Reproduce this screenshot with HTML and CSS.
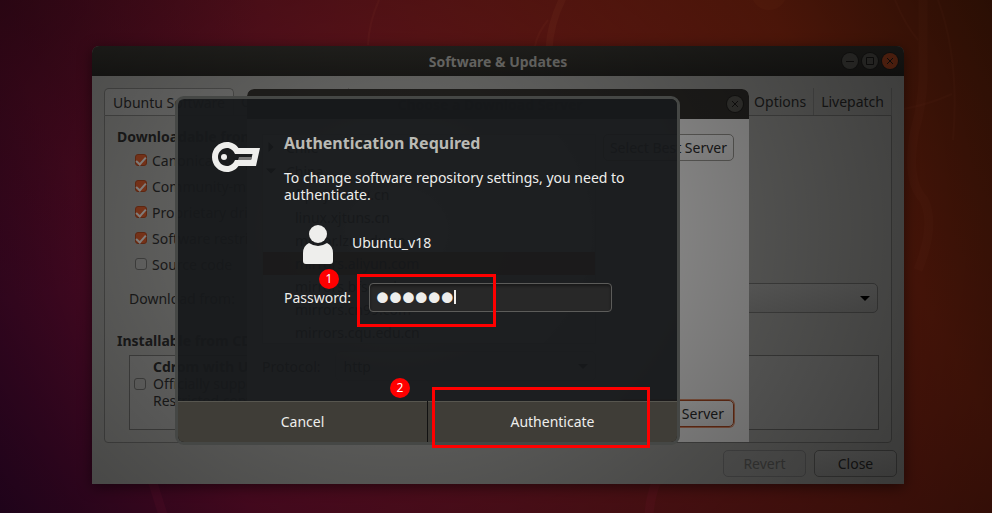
FILE: index.html
```html
<!DOCTYPE html>
<html lang="en">
<head>
<meta charset="utf-8">
<title>Software &amp; Updates</title>
<link rel="stylesheet" href="styles.css">
</head>
<body>
<main class="desktop">
  <svg class="wallpaper" viewBox="0 0 992 513" preserveAspectRatio="none" aria-hidden="true">
    <g fill="none" stroke="#ff7a50" stroke-opacity=".13">
      <path d="M565-6Q550 22 549 50" stroke-width="7"/>
      <path d="M923 0V80Q922 106 915 130Q905 180 924 200Q936 225 918 270" stroke-width="9" stroke-opacity=".09"/>
      <path d="M895 0Q905 25 918 40M938 0Q960 60 953 140M904 109Q930 104 952 94M379 0Q369 22 368 45M548 20Q538 32 535 46" stroke-width="2" stroke-opacity=".1"/>
      <path d="M152 480L164 518M657 480Q649 500 649 518" stroke="#ff3070" stroke-width="9"/>
    </g>
    <circle cx="769" cy="-8" r="18" fill="#ff7a30" fill-opacity=".1"/>
  </svg>

  <section class="window main-window" aria-label="Software &amp; Updates">
    <header class="titlebar">
      <h1 class="title">Software &amp; Updates</h1>
      <div class="controls">
        <button class="control" aria-label="Minimize"><svg viewBox="0 0 16 16"><path d="M4 8.500h8"/></svg></button>
        <button class="control" aria-label="Maximize"><svg viewBox="0 0 16 16"><path d="M4.500 4.500h7v7h-7z"/></svg></button>
        <button class="control control-close" aria-label="Close window"><svg viewBox="0 0 16 16"><path d="M5 5l6 6M11 5l-6 6"/></svg></button>
      </div>
    </header>
    <div class="window-body">
      <nav class="tabs">
        <button class="tab tab-active">Ubuntu Software</button>
        <button class="tab">Other Software</button>
        <button class="tab tab-end">Options</button>
        <button class="tab">Livepatch</button>
      </nav>
      <div class="page">
        <h2 class="heading">Downloadable from the Internet</h2>
        <div class="checks">
          <label class="check"><input type="checkbox" checked>Canonical-supported free and open-source software (main)</label>
          <label class="check"><input type="checkbox" checked>Community-maintained free and open-source software (universe)</label>
          <label class="check"><input type="checkbox" checked>Proprietary drivers for devices (restricted)</label>
          <label class="check"><input type="checkbox" checked>Software restricted by copyright or legal issues (multiverse)</label>
          <label class="check"><input type="checkbox">Source code</label>
        </div>
        <div class="download">
          <label for="source">Download from:</label>
          <span class="select-box"><select id="source"><option>Main server</option></select></span>
        </div>
        <h2 class="heading">Installable from CD-ROM/DVD</h2>
        <div class="media">
          <input type="checkbox" id="cdrom">
          <label for="cdrom"><b>Cdrom with Ubuntu 18.04</b><br>Officially supported<br>Restricted copyright</label>
        </div>
      </div>
      <footer class="footer">
        <button class="button" disabled>Revert</button>
        <button class="button">Close</button>
      </footer>
    </div>
  </section>

  <section class="window server-window" aria-label="Choose a Download Server">
    <header class="titlebar">
      <h2 class="title">Choose a Download Server</h2>
      <div class="controls">
        <button class="control" aria-label="Close dialog"><svg viewBox="0 0 16 16"><path d="M5 5l6 6M11 5l-6 6"/></svg></button>
      </div>
    </header>
    <div class="server-body">
      <div class="server-left">
        <ul class="servers">
          <li class="country"><svg viewBox="0 0 12 12"><path d="M3 0l6 6-6 6z"/></svg>Chile</li>
          <li class="country"><svg viewBox="0 0 12 12"><path d="M0 3h12l-6 6z"/></svg>China</li>
          <li>ftp.sjtu.edu.cn</li>
          <li>linux.xjtuns.cn</li>
          <li>mirror.lzu.edu.cn</li>
          <li class="selected">mirrors.aliyun.com</li>
          <li>mirrors.bfsu.edu.cn</li>
          <li>mirrors.cn99.com</li>
          <li>mirrors.cqu.edu.cn</li>
        </ul>
        <div class="protocol">
          <label for="protocol">Protocol:</label>
          <span class="select-box"><select id="protocol"><option>http</option></select></span>
        </div>
      </div>
      <div class="server-actions">
        <button class="button">Select Best Server</button>
        <button class="button button-focus">Choose Server</button>
      </div>
    </div>
  </section>

  <div class="shade"></div>

  <form class="auth" role="dialog" aria-labelledby="auth-title">
    <div class="auth-body">
      <svg class="key" viewBox="0 0 48 32" aria-hidden="true">
        <path fill="#eeeeec" fill-rule="evenodd" d="M15 1C20 1 24 3.500 26.500 7H48L44 25H26.500C24 28.500 20 31 15 31C6.500 31 0 24.300 0 16S6.500 1 15 1ZM15 7C10 7 6 11 6 16S10 25 15 25C18.500 25 21.500 22.500 23 19H39L40.500 13H23C21.500 9.500 18.500 7 15 7Z"/>
        <circle cx="12" cy="16" r="3" fill="#eeeeec"/>
        <path fill="#777" d="M27 16h13l-1 3H26z"/>
      </svg>
      <div class="auth-main">
        <h2 class="auth-title" id="auth-title">Authentication Required</h2>
        <p class="auth-text">To change software repository settings, you need to authenticate.</p>
        <div class="user">
          <svg class="avatar" viewBox="0 0 30 40" aria-hidden="true">
            <circle cx="15" cy="9" r="9" fill="#eeeeec"/>
            <path fill="#eeeeec" d="M6 18Q15 24 24 18Q30 21 30 28V36Q30 39 27 39H3Q0 39 0 36V28Q0 21 6 18Z"/>
          </svg>
          <span class="user-name">Ubuntu_v18</span>
        </div>
        <div class="password">
          <label for="password">Password:</label>
          <span class="entry"><input id="password" type="password" value="ubuntu"></span>
          <span class="mark mark-password"></span>
          <span class="step step-one">1</span>
        </div>
      </div>
    </div>
    <div class="auth-actions">
      <button type="button">Cancel</button>
      <button type="button">Authenticate</button>
      <span class="mark mark-submit"></span>
      <span class="step step-two">2</span>
    </div>
  </form>
</main>
</body>
</html>
```
FILE: styles.css
```css
* { box-sizing: border-box; }

body {
  margin: 0;
  font: 14px/17px "Noto Sans", "Open Sans", sans-serif;
  color: #2c2c2c;
}

h1, h2, p, ul { margin: 0; padding: 0; }
button, input, select { font: inherit; color: inherit; margin: 0; }

.desktop {
  position: relative;
  min-height: 100vh;
  overflow: hidden;
  background:
    radial-gradient(ellipse 260px 300px at 0 0, rgba(30, 8, 20, .35), transparent),
    linear-gradient(62deg, #4c0840 0%, #84103a 20%, #8c1a2c 42%, #9a261c 65%, #a83014 82%, #802c0c 100%);
}

.wallpaper { position: absolute; inset: 0; width: 100%; height: 100%; }

.shade {
  position: absolute;
  inset: 0;
  background: radial-gradient(ellipse 700px 600px at 40% 45%, rgba(0, 0, 0, .3), rgba(0, 0, 0, .7));
}

/* Windows */
.window {
  position: absolute;
  border-radius: 7px 7px 0 0;
}
.main-window {
  top: 46px;
  left: 92px;
  right: 88px;
  background: #9e9e9b;
  box-shadow: 0 3px 14px rgba(0, 0, 0, .5);
}
.server-window { top: 89px; left: 247px; right: 243px; background: #f2f1f0; }

.titlebar {
  display: flex;
  align-items: center;
  height: 30px;
  padding: 0 6px 0 62px;
  border-radius: 7px 7px 0 0;
  background: linear-gradient(#35342f, #272623);
}
.title { flex: 1; text-align: center; font-size: 14px; color: #aaa9a4; }
.server-window .titlebar { padding-left: 6px; background: #32302d; }
.server-window .title { color: #0c0c0c; }
.controls { display: flex; gap: 4px; }
.control {
  width: 16px;
  height: 16px;
  padding: 0;
  border: 0;
  border-radius: 50%;
  background: #565550;
  box-shadow: 0 0 0 1px #22211f;
}
.control svg { display: block; width: 16px; height: 16px; fill: none; stroke: #1c1b19; }
.control-close { background: #b84a22; }

.window-body { padding: 12px 12px 7px; }

.tabs { display: flex; height: 27px; }
.tab {
  padding: 0 7px;
  border: 0;
  border-right: 1px solid #848482;
  background: none;
  white-space: nowrap;
}
.tab-active {
  min-width: 130px;
  border: 1px solid #777775;
  border-bottom: 0;
  border-radius: 5px 5px 0 0;
  background: #a9a9a7;
}
.tab-end { margin-left: auto; }

.page {
  height: 328px;
  padding: 12px;
  border: 1px solid #757573;
  border-radius: 0 0 4px 4px;
  background: #a3a3a0;
}
.heading { font-size: 14px; line-height: 18px; white-space: nowrap; }
.checks { padding-left: 18px; margin-top: 1px; }
.check { display: flex; align-items: center; gap: 5px; height: 26px; }

input[type="checkbox"] {
  appearance: none;
  flex: none;
  width: 12px;
  height: 12px;
  border: 1px solid #6c6c6a;
  border-radius: 3px;
  background: #a9a9a7;
}
input[type="checkbox"]:checked {
  display: grid;
  place-items: center;
  border-color: #a8461f;
  background: #d35a2c;
}
input[type="checkbox"]:checked::after {
  content: "";
  width: 8px;
  height: 4px;
  border: solid #e6e2df;
  border-width: 0 0 2px 2px;
  rotate: -48deg;
}

.download { display: flex; align-items: center; gap: 12px; margin: 6px 1px 19px 12px; }
.select-box { position: relative; flex: 1; }
.select-box::after {
  content: "";
  position: absolute;
  right: 8px;
  top: 13px;
  border: 5px solid transparent;
  border-top-color: #000;
}
select {
  display: block;
  appearance: none;
  width: 100%;
  height: 30px;
  padding: 0 8px;
  border: 1px solid #737371;
  border-radius: 5px;
  background: linear-gradient(#aaaaa8, #9c9c9a);
}

.media {
  display: flex;
  align-items: center;
  gap: 7px;
  height: 75px;
  margin: 5px 0 0 12px;
  padding: 0 4px 18px;
  border: 1px solid #6c6c6a;
  background: #a9a9a7;
}

.footer { display: flex; justify-content: flex-end; gap: 8px; margin: 7px -5px 0 0; }
.button {
  height: 27px;
  padding: 0 6px;
  border: 1px solid #6c6c6a;
  border-radius: 5px;
  background: linear-gradient(#a6a6a4, #9a9a98);
  white-space: nowrap;
}
.footer .button { min-width: 83px; }
.button:disabled { color: #686866; border-color: #808080; background: #9c9c9a; }

/* Server chooser */
.server-body { display: flex; gap: 7px; padding: 15px; min-height: 323px; }
.server-left { flex: 1; }
.servers { height: 210px; border: 1px solid #d2d0cd; background: #fff; list-style: none; }
.servers li { height: 23px; padding-left: 32px; line-height: 23px; }
.servers .country { display: flex; align-items: center; gap: 10px; height: 24px; padding-left: 3px; }
.servers svg { width: 10px; height: 10px; }
.servers .selected { background: #b8642c; color: #000; }
.protocol { display: flex; align-items: center; gap: 14px; margin-top: 7px; }
.protocol select { background: #f6f5f4; border-color: #d2d0cd; }
.server-actions { display: flex; flex-direction: column; align-items: flex-end; justify-content: space-between; }
.server-actions .button { background: linear-gradient(#fbfbfb, #eeedec); border-color: #9a9893; }
.server-actions .button-focus { padding: 0 9px; border-color: #b04c24; box-shadow: 0 0 0 1px #e0906c; }

/* Authentication dialog */
.auth {
  position: absolute;
  top: 96px;
  left: 175px;
  width: 505px;
  border: 3px solid #454745;
  border-radius: 9px;
  color: #eeeeec;
}
.auth-body {
  display: flex;
  gap: 24px;
  height: 302px;
  padding: 34px 34px 0;
  border-radius: 6px 6px 0 0;
  background: rgba(23, 25, 27, .955);
}
.key { flex: none; width: 48px; height: 32px; margin-top: 8px; }
.auth-main { flex: 1; }
.auth-title { font-size: 16px; line-height: 20px; color: #babab4; }
.auth-text { margin-top: 16px; }
.user { display: flex; align-items: center; gap: 19px; margin: 22px 0 18px 19px; }
.user-name { padding-bottom: 5px; }
.avatar { width: 30px; height: 40px; }
.password { position: relative; display: flex; align-items: center; gap: 15px; }
.password label { width: 70px; }
.entry { position: relative; }
.entry input {
  display: block;
  width: 243px;
  height: 29px;
  padding: 0 6px;
  border: 1px solid #5c5c5a;
  border-radius: 4px;
  outline: 0;
  background: #282828;
  box-shadow: inset 0 2px 3px rgba(0, 0, 0, .4);
  font: bold 37px/27px "Liberation Sans", sans-serif;
}
.entry::after {
  content: "";
  position: absolute;
  top: 7px;
  left: 85px;
  width: 2px;
  height: 14px;
  background: #eeeeec;
}

.auth-actions {
  position: relative;
  display: grid;
  grid-template-columns: 1fr 1fr;
  gap: 1px;
  height: 41px;
  border-radius: 0 0 6px 6px;
  background: #111;
}
.auth-actions button {
  padding: 0 0 2px;
  border: 0;
  border-top: 1px solid #57564f;
  background: #3f3d37;
}
.auth-actions button:first-child { border-bottom-left-radius: 6px; }
.auth-actions button:nth-child(2) { border-bottom-right-radius: 6px; }

/* Numbered highlights */
.mark { position: absolute; border: 3px solid #f00; pointer-events: none; }
.mark-password { top: -9px; left: 73px; width: 139px; height: 53px; }
.mark-submit { top: -14px; left: 254px; width: 218px; height: 61px; }
.step {
  position: absolute;
  width: 20px;
  height: 20px;
  border-radius: 50%;
  background: #f00;
  color: #fff;
  font-size: 12px;
  line-height: 20px;
  text-align: center;
}
.step-one { top: -14px; left: 35px; }
.step-two { top: -23px; left: 212px; }
```
